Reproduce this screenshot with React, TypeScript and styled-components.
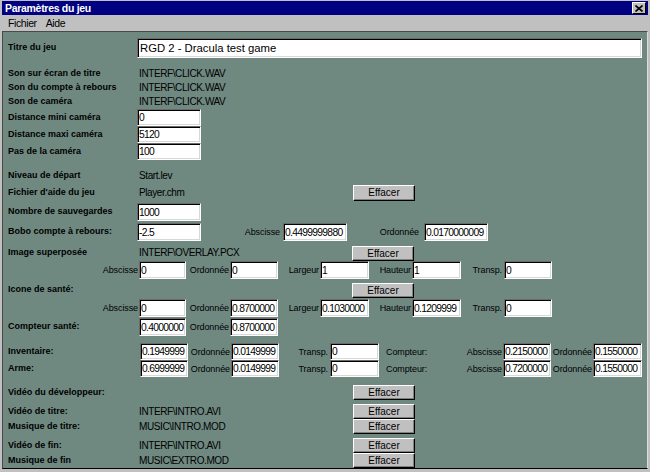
import React from "react";
import styled, { createGlobalStyle } from "styled-components";

const GlobalStyle = createGlobalStyle`
  html, body {
    margin: 0;
    padding: 0;
    background: #c0c0c0;
  }
  body {
    font-family: "Liberation Sans", Arial, sans-serif;
  }
`;

const Window = styled.div`
  width: 650px;
  height: 472px;
  box-sizing: border-box;
  background: #c0c0c0;
  padding: 1px 2px 3px 2px;
  display: flex;
  flex-direction: column;
  overflow: hidden;
`;

const TitleBar = styled.div`
  height: 14px;
  flex-shrink: 0;
  background: #000080;
  color: #fff;
  display: flex;
  align-items: center;
  justify-content: space-between;
  padding: 0 2px 0 3px;
  font-size: 10.5px;
  font-weight: bold;
  letter-spacing: -0.3px;
`;

const CloseButton = styled.div`
  width: 14px;
  height: 12px;
  box-sizing: border-box;
  background: #c0c0c0;
  border-top: 1px solid #fff;
  border-left: 1px solid #fff;
  border-right: 1px solid #000;
  border-bottom: 1px solid #000;
  display: flex;
  align-items: center;
  justify-content: center;
`;

const MenuBar = styled.div`
  height: 16px;
  flex-shrink: 0;
  display: flex;
  align-items: center;
  gap: 9px;
  padding-left: 6px;
  font-size: 10.5px;
  letter-spacing: -0.4px;
  color: #000;
`;

const Client = styled.div`
  flex: 1;
  background: #6f8980;
  border-top: 1px solid #4a4a4a;
  border-left: 1px solid #4a4a4a;
  border-right: 1px solid #dcdcdc;
  border-bottom: 1px solid #000;
  padding: 5px 0 0 5px;
  display: flex;
  flex-direction: column;
`;

const Row = styled.div<{ $h: number; $mt?: number }>`
  display: flex;
  align-items: center;
  height: ${(p) => p.$h}px;
  margin-top: ${(p) => p.$mt ?? 0}px;
  flex-shrink: 0;
`;

const Label = styled.div<{ $w?: number }>`
  width: ${(p) => p.$w ?? 129}px;
  flex-shrink: 0;
  font-size: 9px;
  font-weight: bold;
  color: #000;
  white-space: nowrap;
  margin-top: -2px;
`;

const Value = styled.div<{ $w?: number }>`
  width: ${(p) => (p.$w ? `${p.$w}px` : "auto")};
  flex-shrink: 0;
  box-sizing: border-box;
  padding-left: 2px;
  font-size: 10px;
  letter-spacing: -0.4px;
  color: #000;
  white-space: nowrap;
  margin-top: -1px;
`;

const Caption = styled.div<{ $w: number; $pr?: number; $left?: boolean }>`
  width: ${(p) => p.$w}px;
  flex-shrink: 0;
  box-sizing: border-box;
  text-align: ${(p) => (p.$left ? "left" : "right")};
  padding-right: ${(p) => p.$pr ?? 1}px;
  padding-left: ${(p) => (p.$left ? 7 : 0)}px;
  font-size: 9px;
  letter-spacing: -0.1px;
  color: #000;
  white-space: nowrap;
`;

const Field = styled.input<{ $w: number; $h?: number }>`
  width: ${(p) => p.$w}px;
  height: ${(p) => (p.$h ? `${p.$h}px` : "100%")};
  flex-shrink: 0;
  box-sizing: border-box;
  margin: 0;
  padding: 0 0 0 1px;
  background: #fff;
  border-top: 1px solid #6a6a6a;
  border-left: 1px solid #6a6a6a;
  border-right: 1px solid #fff;
  border-bottom: 1px solid #fff;
  box-shadow: inset 1px 1px 0 #000, inset -1px -1px 0 #d8d8d8;
  font-family: "Liberation Sans", Arial, sans-serif;
  font-size: 10.3px;
  letter-spacing: -0.7px;
  color: #000;
  outline: none;
`;

const TitleField = styled(Field)`
  padding-left: 2px;
  font-size: 11.3px;
  letter-spacing: 0;
`;

const Button = styled.div<{ $h?: number }>`
  width: 62px;
  height: ${(p) => p.$h ?? 15}px;
  flex-shrink: 0;
  box-sizing: border-box;
  background: #c0c0c0;
  border-top: 1px solid #fff;
  border-left: 1px solid #fff;
  border-right: 1px solid #000;
  border-bottom: 1px solid #000;
  box-shadow: inset -1px -1px 0 #808080;
  display: flex;
  align-items: center;
  justify-content: center;
  font-size: 10px;
  color: #000;
`;

type Sub = { abs: string; ord: string; lar: string; hau: string; tr: string };

const SizeRow: React.FC<{ v: Sub; mt?: number }> = ({ v, mt }) => (
  <Row $h={18} $mt={mt}>
    <Caption $w={131}>Abscisse</Caption>
    <Field $w={47} readOnly value={v.abs} />
    <Caption $w={44}>Ordonnée</Caption>
    <Field $w={48} readOnly value={v.ord} />
    <Caption $w={42}>Largeur</Caption>
    <Field $w={49} readOnly value={v.lar} />
    <Caption $w={43}>Hauteur</Caption>
    <Field $w={49} readOnly value={v.hau} />
    <Caption $w={43} $pr={2}>Transp.</Caption>
    <Field $w={48} readOnly value={v.tr} />
  </Row>
);

const HudRow: React.FC<{ label: string; v: string[]; mt?: number }> = ({ label, v, mt }) => (
  <Row $h={17} $mt={mt}>
    <Label $w={132}>{label}</Label>
    <Field $w={48} readOnly value={v[0]} />
    <Caption $w={43}>Ordonnée</Caption>
    <Field $w={48} readOnly value={v[1]} />
    <Caption $w={51} $pr={2}>Transp.</Caption>
    <Field $w={49} readOnly value={v[2]} />
    <Caption $w={50} $left>Compteur:</Caption>
    <Caption $w={74}>Abscisse</Caption>
    <Field $w={48} readOnly value={v[3]} />
    <Caption $w={42}>Ordonnée</Caption>
    <Field $w={49} readOnly value={v[4]} />
  </Row>
);

const FileRow: React.FC<{ label: string; value?: string; mt?: number; button?: boolean }> = ({
  label,
  value,
  mt,
  button,
}) => (
  <Row $h={15} $mt={mt}>
    <Label>{label}</Label>
    <Value $w={216}>{value}</Value>
    {button && <Button>Effacer</Button>}
  </Row>
);

const App: React.FC = () => {
  return (
    <>
      <GlobalStyle />
      <Window>
        <TitleBar>
          <span>Paramètres du jeu</span>
          <CloseButton>
            <svg width="8" height="7" viewBox="0 0 8 7">
              <path d="M0.5 0.5 L7.5 6.5 M7.5 0.5 L0.5 6.5" stroke="#000" strokeWidth="1.6" />
            </svg>
          </CloseButton>
        </TitleBar>
        <MenuBar>
          <span>Fichier</span>
          <span>Aide</span>
        </MenuBar>
        <Client>
          <Row $h={21}>
            <Label>Titre du jeu</Label>
            <TitleField $w={505} $h={20} readOnly value="RGD 2 - Dracula test game" />
          </Row>

          <Row $h={14} $mt={9}>
            <Label>Son sur écran de titre</Label>
            <Value>INTERF\CLICK.WAV</Value>
          </Row>
          <Row $h={14}>
            <Label>Son du compte à rebours</Label>
            <Value>INTERF\CLICK.WAV</Value>
          </Row>
          <Row $h={14}>
            <Label>Son de caméra</Label>
            <Value>INTERF\CLICK.WAV</Value>
          </Row>
          <Row $h={17}>
            <Label>Distance mini caméra</Label>
            <Field $w={64} readOnly value="0" />
          </Row>
          <Row $h={17}>
            <Label>Distance maxi caméra</Label>
            <Field $w={64} readOnly value="5120" />
          </Row>
          <Row $h={17}>
            <Label>Pas de la caméra</Label>
            <Field $w={64} readOnly value="100" />
          </Row>

          <Row $h={14} $mt={9}>
            <Label>Niveau de départ</Label>
            <Value>Start.lev</Value>
          </Row>
          <Row $h={17} $mt={1}>
            <Label>Fichier d'aide du jeu</Label>
            <Value $w={216}>Player.chm</Value>
            <Button $h={16}>Effacer</Button>
          </Row>
          <Row $h={18} $mt={2}>
            <Label>Nombre de sauvegardes</Label>
            <Field $w={64} readOnly value="1000" />
          </Row>
          <Row $h={18} $mt={2}>
            <Label>Bobo compte à rebours:</Label>
            <Field $w={64} readOnly value="-2.5" />
            <Caption $w={82} $pr={3}>Abscisse</Caption>
            <Field $w={64} readOnly value="0.4499999880" />
            <Caption $w={77} $pr={5}>Ordonnée</Caption>
            <Field $w={64} readOnly value="0.0170000009" />
          </Row>

          <Row $h={16} $mt={4}>
            <Label>Image superposée</Label>
            <Value $w={215}>INTERF\OVERLAY.PCX</Value>
            <Button>Effacer</Button>
          </Row>
          <SizeRow v={{ abs: "0", ord: "0", lar: "1", hau: "1", tr: "0" }} />

          <Row $h={16} $mt={3}>
            <Label>Icone de santé:</Label>
            <Value $w={215} />
            <Button>Effacer</Button>
          </Row>
          <SizeRow
            mt={1}
            v={{ abs: "0", ord: "0.8700000", lar: "0.1030000", hau: "0.1209999", tr: "0" }}
          />
          <Row $h={18} $mt={1}>
            <Label $w={131}>Compteur santé:</Label>
            <Field $w={47} readOnly value="0.4000000" />
            <Caption $w={44}>Ordonnée</Caption>
            <Field $w={48} readOnly value="0.8700000" />
          </Row>

          <HudRow
            mt={7}
            label="Inventaire:"
            v={["0.1949999", "0.0149999", "0", "0.2150000", "0.1550000"]}
          />
          <HudRow label="Arme:" v={["0.6999999", "0.0149999", "0", "0.7200000", "0.1550000"]} />

          <Row $h={17} $mt={7}>
            <Label>Vidéo du développeur:</Label>
            <Value $w={216} />
            <Button>Effacer</Button>
          </Row>

          <FileRow mt={3} label="Vidéo de titre:" value="INTERF\INTRO.AVI" button />
          <FileRow label="Musique de titre:" value="MUSIC\INTRO.MOD" button />

          <FileRow mt={4} label="Vidéo de fin:" value="INTERF\INTRO.AVI" button />
          <FileRow label="Musique de fin" value="MUSIC\EXTRO.MOD" button />
        </Client>
      </Window>
    </>
  );
};

export default App;
